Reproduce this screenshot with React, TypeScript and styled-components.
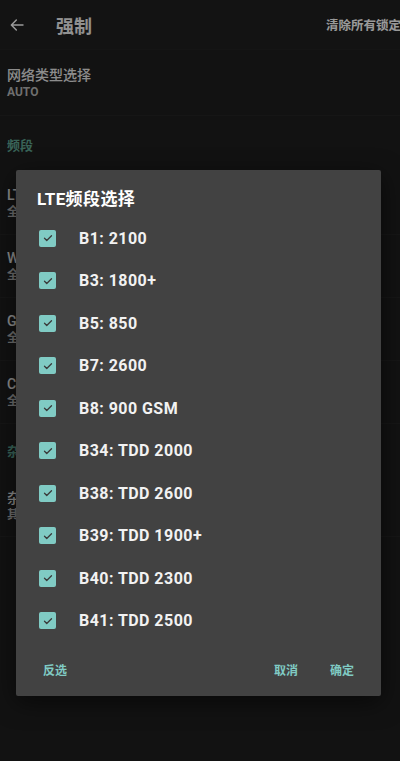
import * as React from 'react';
import styled, { createGlobalStyle } from 'styled-components';

const GlobalStyle = createGlobalStyle`
  html, body {
    margin: 0;
    padding: 0;
    background: #121212;
  }
  body {
    font-family: Roboto, "Noto Sans CJK SC", sans-serif;
    -webkit-font-smoothing: antialiased;
  }
`;

const Screen = styled.div`
  position: relative;
  width: 400px;
  height: 761px;
  overflow: hidden;
  background: #1e1e1e;
`;

const Toolbar = styled.header`
  display: flex;
  align-items: center;
  height: 49px;
  padding-left: 9px;
  background: #202020;
  border-bottom: 1px solid #242424;
`;

const BackButton = styled.div`
  display: flex;
  align-items: center;
  width: 18px;
  height: 18px;
  color: #fff;
`;

const Title = styled.h1`
  margin: 0 0 0 29px;
  font-size: 18px;
  font-weight: 700;
  color: #f2f2f2;
  flex: 1;
`;

const ToolbarAction = styled.span`
  font-size: 12.5px;
  font-weight: 700;
  color: #ffffff;
  white-space: nowrap;
  margin-right: -1px;
`;

const Pref = styled.div<{ $h: number }>`
  display: flex;
  flex-direction: column;
  justify-content: center;
  height: ${(p) => p.$h}px;
  padding-left: 7px;
  border-bottom: 1px solid #262626;
`;

const PrefTitle = styled.div`
  font-size: 14px;
  font-weight: 500;
  color: #eaeaea;
  line-height: 18px;
`;

const PrefSummary = styled.div`
  font-size: 12px;
  font-weight: 700;
  color: #b8b8b8;
  line-height: 16px;
`;

const Category = styled.div<{ $h: number }>`
  display: flex;
  align-items: center;
  height: ${(p) => p.$h}px;
  padding-left: 7px;
  font-size: 13px;
  font-weight: 700;
  color: #5fa592;
`;

const Scrim = styled.div`
  position: absolute;
  inset: 0;
  background: rgba(0, 0, 0, 0.4);
`;

const Dialog = styled.div`
  position: absolute;
  left: 16px;
  top: 170px;
  width: 365px;
  height: 526px;
  display: flex;
  flex-direction: column;
  background: #424242;
  border-radius: 2px;
  box-shadow: 0 6px 24px rgba(0, 0, 0, 0.55);
`;

const DialogTitle = styled.h2`
  margin: 0;
  padding: 16px 0 0 21px;
  height: 31px;
  line-height: 26px;
  font-size: 17px;
  font-weight: 700;
  letter-spacing: 0.4px;
  color: #ffffff;
`;

const OptionList = styled.div`
  display: flex;
  flex-direction: column;
`;

const Option = styled.label`
  display: flex;
  align-items: center;
  height: 42.5px;
  padding-left: 23px;
  gap: 23px;
`;

const Box = styled.span`
  display: flex;
  align-items: center;
  justify-content: center;
  width: 17px;
  height: 17px;
  border-radius: 2px;
  background: #80cbc4;
`;

const OptionText = styled.span`
  font-size: 16px;
  font-weight: 700;
  color: #f2f2f2;
  letter-spacing: 0.45px;
`;

const Actions = styled.div`
  display: flex;
  align-items: center;
  height: 34px;
  margin-top: 10px;
  padding: 0 27px;
`;

const ActionButton = styled.span<{ $gap?: string }>`
  font-size: 12px;
  font-weight: 700;
  color: #80cbc4;
  margin-left: ${(p) => p.$gap ?? '0'};
`;

const bands = [
  'B1: 2100',
  'B3: 1800+',
  'B5: 850',
  'B7: 2600',
  'B8: 900 GSM',
  'B34: TDD 2000',
  'B38: TDD 2600',
  'B39: TDD 1900+',
  'B40: TDD 2300',
  'B41: TDD 2500',
];

const Check = () => (
  <svg width="12" height="12" viewBox="0 0 24 24" fill="none">
    <path d="M5 12.5l4.5 4.5L19 7.5" stroke="#3a3a3a" strokeWidth="2.6" strokeLinecap="round" strokeLinejoin="round" />
  </svg>
);

const App = () => (
  <>
    <GlobalStyle />
    <Screen>
      <Toolbar>
        <BackButton>
          <svg width="16" height="16" viewBox="0 0 24 24" fill="none">
            <path d="M21 12H4M11 4.5L3.5 12l7.5 7.5" stroke="currentColor" strokeWidth="2.2" strokeLinecap="round" strokeLinejoin="round" />
          </svg>
        </BackButton>
        <Title>强制</Title>
        <ToolbarAction>清除所有锁定</ToolbarAction>
      </Toolbar>
      <Pref $h={65}>
        <PrefTitle>网络类型选择</PrefTitle>
        <PrefSummary>AUTO</PrefSummary>
      </Pref>
      <Category $h={56}>频段</Category>
      <Pref $h={62}>
        <PrefTitle>LTE频段</PrefTitle>
        <PrefSummary>全部频段</PrefSummary>
      </Pref>
      <Pref $h={62}>
        <PrefTitle>WCDMA频段</PrefTitle>
        <PrefSummary>全部频段</PrefSummary>
      </Pref>
      <Pref $h={62}>
        <PrefTitle>GSM频段</PrefTitle>
        <PrefSummary>全部频段</PrefSummary>
      </Pref>
      <Pref $h={62}>
        <PrefTitle>CDMA频段</PrefTitle>
        <PrefSummary>全部频段</PrefSummary>
      </Pref>
      <Category $h={52}>杂项</Category>
      <Pref $h={60}>
        <PrefTitle>杂项设置</PrefTitle>
        <PrefSummary>其他选项</PrefSummary>
      </Pref>
      <Scrim />
      <Dialog>
        <DialogTitle>LTE频段选择</DialogTitle>
        <OptionList>
          {bands.map((b) => (
            <Option key={b}>
              <Box>
                <Check />
              </Box>
              <OptionText>{b}</OptionText>
            </Option>
          ))}
        </OptionList>
        <Actions>
          <ActionButton>反选</ActionButton>
          <ActionButton $gap="auto">取消</ActionButton>
          <ActionButton $gap="32px">确定</ActionButton>
        </Actions>
      </Dialog>
    </Screen>
  </>
);

export default App;
